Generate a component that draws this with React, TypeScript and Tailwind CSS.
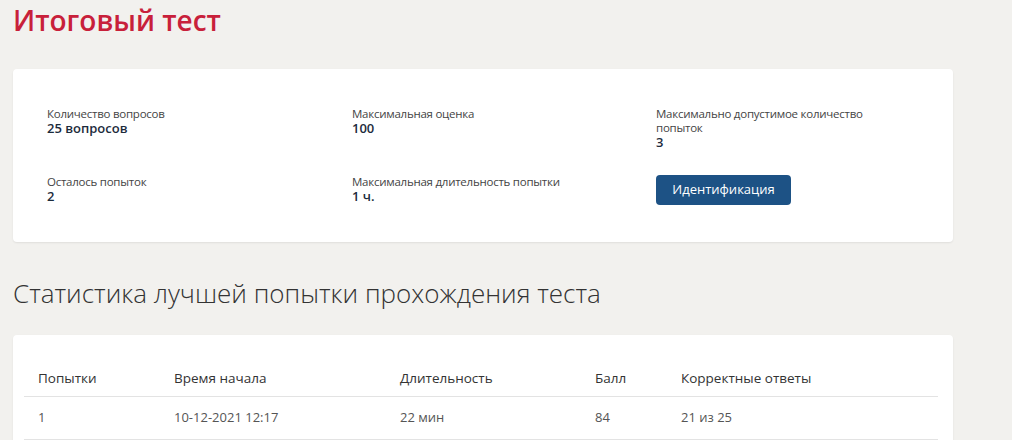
const SANS = 'font-["Open_Sans","Liberation_Sans",sans-serif]'

type Info = { label: string; value: string }

const infoTop: Info[] = [
  { label: 'Количество вопросов', value: '25 вопросов' },
  { label: 'Максимальная оценка', value: '100' },
  { label: 'Максимально допустимое количество попыток', value: '3' },
]

const infoBottom: Info[] = [
  { label: 'Осталось попыток', value: '2' },
  { label: 'Максимальная длительность попытки', value: '1 ч.' },
]

function InfoItem({ label, value }: Info) {
  return (
    <div className="max-w-[232px]">
      <div className="text-[11.5px] leading-[14px] tracking-[-0.25px] text-[#444]">{label}</div>
      <div className="text-[13px] font-semibold leading-[14px] text-[#1c2b3c]">{value}</div>
    </div>
  )
}

const rows = [
  { n: '1', start: '10-12-2021 12:17', dur: '22 мин', score: '84', correct: '21 из 25' },
]

export default function App() {
  return (
    <div className={`${SANS} min-h-[440px] w-full bg-[#f2f1ee] px-[13px] pt-[1px] pb-8`}>
      <h1 className="text-[28px] font-semibold leading-[38px] text-[#c8203a]">Итоговый тест</h1>

      <section className="mt-[30px] w-[940px] rounded-[4px] bg-white pt-[38px] pb-[37px] pl-[34px] shadow-[0_1px_2px_rgba(0,0,0,0.08)]">
        <div className="grid grid-cols-[305px_304px_1fr] gap-y-[26px]">
          {infoTop.map((i) => (
            <InfoItem key={i.label} {...i} />
          ))}
          {infoBottom.map((i) => (
            <InfoItem key={i.label} {...i} />
          ))}
          <div>
            <button className="h-[30px] w-[135px] rounded-[4px] bg-[#1d5285] text-[13px] font-medium text-white">
              Идентификация
            </button>
          </div>
        </div>
      </section>

      <h2 className="mt-[35px] text-[26px] font-light leading-[32px] text-[#333]">
        Статистика лучшей попытки прохождения теста
      </h2>

      <section className="mt-[26px] w-[940px] rounded-[4px] bg-white pt-[25px] pl-[11px] pr-[15px] pb-6 shadow-[0_1px_2px_rgba(0,0,0,0.08)]">
        <table className="w-full border-collapse text-left text-[13px]">
          <colgroup>
            <col className="w-[136px]" />
            <col className="w-[226px]" />
            <col className="w-[195px]" />
            <col className="w-[86px]" />
            <col />
          </colgroup>
          <thead>
            <tr className="h-[36px] border-b border-[#e3e3e3] text-[13.5px] text-[#333]">
              <th className="px-[14px] font-medium">Попытки</th>
              <th className="px-[14px] font-medium">Время начала</th>
              <th className="px-[14px] font-medium">Длительность</th>
              <th className="px-[14px] font-medium">Балл</th>
              <th className="px-[14px] font-medium">Корректные ответы</th>
            </tr>
          </thead>
          <tbody>
            {rows.map((r) => (
              <tr key={r.n} className="h-[43px] border-b border-[#e3e3e3] text-[#555]">
                <td className="px-[14px]">{r.n}</td>
                <td className="px-[14px]">{r.start}</td>
                <td className="px-[14px]">{r.dur}</td>
                <td className="px-[14px]">{r.score}</td>
                <td className="px-[14px]">{r.correct}</td>
              </tr>
            ))}
          </tbody>
        </table>
      </section>
    </div>
  )
}
